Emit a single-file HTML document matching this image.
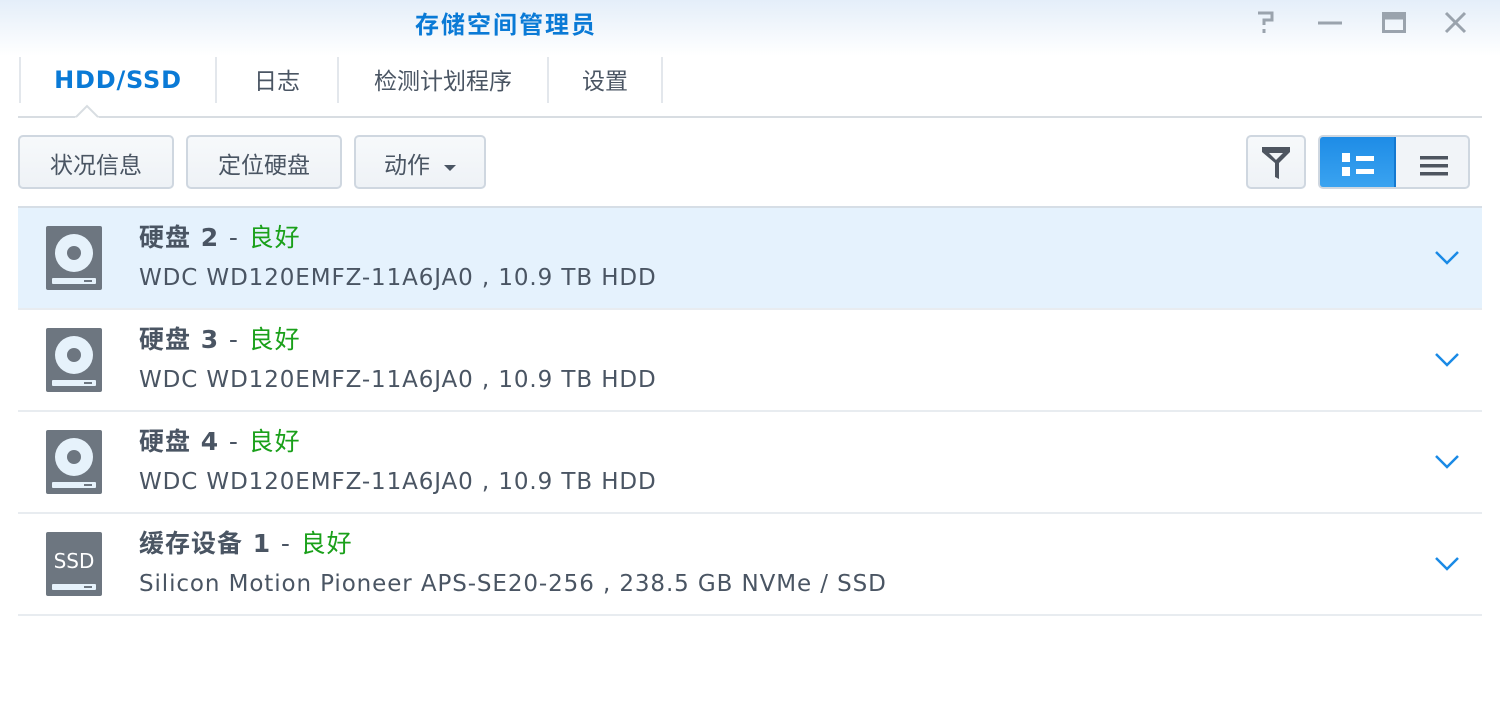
<!DOCTYPE html>
<html><head><meta charset="utf-8"><style>
*{margin:0;padding:0;box-sizing:border-box}
body{width:1500px;height:706px;background:#fff;font-family:"DejaVu Sans","Noto Sans CJK SC",sans-serif;color:#4a5563;position:relative;overflow:hidden}
.top{position:absolute;left:0;top:0;width:1500px;height:56px;background:linear-gradient(#e4eef9,#fff)}
.title{position:absolute;left:415px;top:5px;font-size:24px;color:#0a7ad6;font-weight:bold;letter-spacing:2px;font-family:"Noto Sans CJK SC",sans-serif}
.tab{position:absolute;top:57px;height:46px;border-left:2px solid #e3e7ec;font-size:23px;line-height:44px;text-align:center;color:#4a5563;font-family:"Noto Sans CJK SC",sans-serif}
.abs{position:absolute}
.btn{position:absolute;top:135px;height:54px;border:2px solid #cfd7e0;border-radius:5px;background:linear-gradient(#f7f9fb,#eef2f6);font-size:23px;line-height:52px;text-align:center;color:#4a5563;font-family:"Noto Sans CJK SC",sans-serif}
.row{position:absolute;left:18px;width:1464px;border-bottom:2px solid #e8ecf0}
.row .t{position:absolute;left:121px;top:10px;font-size:25px;font-weight:bold;color:#4a5563;letter-spacing:1px}
.row .t span{font-weight:normal}
.row .t .g{color:#1aa01a;font-weight:normal}
.row .s{position:absolute;left:121px;top:57px;font-size:23px;color:#4a5563;letter-spacing:0.9px}
.row svg.ic{position:absolute;left:28px;top:18px}
.row svg.ch{position:absolute;left:1416px;top:42px}
</style></head><body>
<div class="top"></div>
<div class="title">存储空间管理员</div>
<svg class="abs" style="left:1250px;top:8px" width="230" height="30" viewBox="0 0 230 30">
<g fill="none" stroke="#9aa3ad" stroke-width="3">
<path d="M8 5h14v7h-8v5"/><path d="M14 21v4" />
<path d="M68 15h24"/>
<rect x="133.5" y="5.5" width="21" height="18"/><path d="M133 9h22" stroke-width="5"/>
<path d="M196 5l19 19M215 5l-19 19"/>
</g></svg>
<div class="tab" style="left:19px;width:196px;color:#0a7ad6;font-weight:bold;font-size:24px;letter-spacing:0.8px;line-height:46px;font-family:'DejaVu Sans',sans-serif">HDD/SSD</div>
<div class="tab" style="left:215px;width:122px">日志</div>
<div class="tab" style="left:337px;width:210px">检测计划程序</div>
<div class="tab" style="left:547px;width:114px">设置</div>
<div class="tab" style="left:661px;width:2px"></div>
<div class="abs" style="left:18px;top:116px;width:1464px;height:2px;background:#d8dde2"></div>
<svg class="abs" style="left:75px;top:103px" width="24" height="16"><path d="M0 15L12 3L24 15" fill="#fff" stroke="#d8dde2" stroke-width="2"/><rect x="0" y="14.5" width="24" height="4" fill="#fff"/></svg>
<div class="btn" style="left:18px;width:156px">状况信息</div>
<div class="btn" style="left:186px;width:156px">定位硬盘</div>
<div class="btn" style="left:354px;width:132px;text-align:left;padding-left:28px">动作 <svg width="14" height="10" style="margin-left:8px"><path d="M1 2h12L7 8z" fill="#4a5563"/></svg></div>
<div class="btn" style="left:1246px;width:60px"><svg width="32" height="34" style="margin-top:9px" viewBox="0 0 32 34"><path d="M2 1h28v5L19 17v16l-4 -2V17L2 6z" fill="#4e5560"/><path d="M9 7h14l-7 7z" fill="#f1f4f7"/></svg></div>
<div class="abs" style="left:1318px;top:135px;width:152px;height:54px;border:2px solid #cfd7e0;border-radius:5px;background:#f1f4f8;overflow:hidden">
<div style="position:absolute;left:-2px;top:-2px;width:78px;height:54px;background:linear-gradient(#1e8ce6,#3aa3f0);border:2px solid #1478d0;border-radius:5px 0 0 5px"></div>
<svg class="abs" style="left:22px;top:16px" width="34" height="24"><rect x="0" y="0" width="8" height="9" fill="#fff"/><rect x="0" y="14" width="8" height="9" fill="#fff"/><rect x="14" y="3" width="18" height="5" fill="#fff"/><rect x="14" y="16" width="18" height="5" fill="#fff"/></svg>
<svg class="abs" style="left:100px;top:19px" width="28" height="20"><rect y="0" width="28" height="3.5" fill="#4e5560"/><rect y="8" width="28" height="3.5" fill="#4e5560"/><rect y="16" width="28" height="3.5" fill="#4e5560"/></svg>
</div>
<div class="abs" style="left:18px;top:206px;width:1464px;height:2px;background:#d6dee6"></div>
<svg width="0" height="0" style="position:absolute"><defs>
<g id="hdd"><rect width="56" height="64" rx="2" fill="#6d7680"/><circle cx="28" cy="27" r="19" fill="#e6f2fb"/><circle cx="28" cy="27" r="7" fill="#6d7680"/><rect x="6" y="52" width="44" height="6" rx="1" fill="#e6f2fb"/><rect x="38" y="54" width="8" height="2" fill="#6d7680"/></g>
<path id="chev" d="M2 2l11 11L24 2" fill="none" stroke="#1a8ae6" stroke-width="2.5"/>
</defs></svg>
<div class="row" style="top:208px;height:102px;background:#e5f2fd"><svg class="ic" width="56" height="64"><use href="#hdd"/></svg><div class="t">硬盘 2 <span>-</span> <span class="g">良好</span></div><div class="s">WDC WD120EMFZ-11A6JA0 , 10.9 TB HDD</div><svg class="ch" width="26" height="16"><use href="#chev"/></svg></div>
<div class="row" style="top:310px;height:102px"><svg class="ic" width="56" height="64"><use href="#hdd"/></svg><div class="t">硬盘 3 <span>-</span> <span class="g">良好</span></div><div class="s">WDC WD120EMFZ-11A6JA0 , 10.9 TB HDD</div><svg class="ch" width="26" height="16"><use href="#chev"/></svg></div>
<div class="row" style="top:412px;height:102px"><svg class="ic" width="56" height="64"><use href="#hdd"/></svg><div class="t">硬盘 4 <span>-</span> <span class="g">良好</span></div><div class="s">WDC WD120EMFZ-11A6JA0 , 10.9 TB HDD</div><svg class="ch" width="26" height="16"><use href="#chev"/></svg></div>
<div class="row" style="top:514px;height:102px"><svg class="ic" width="56" height="64"><rect width="56" height="64" rx="2" fill="#6d7680"/><text x="28" y="36" text-anchor="middle" font-family="DejaVu Sans,sans-serif" font-size="20" fill="#fff">SSD</text><rect x="6" y="52" width="44" height="6" rx="1" fill="#e6f2fb"/><rect x="38" y="54" width="8" height="2" fill="#6d7680"/></svg><div class="t">缓存设备 1 <span>-</span> <span class="g">良好</span></div><div class="s">Silicon Motion Pioneer APS-SE20-256 , 238.5 GB NVMe / SSD</div><svg class="ch" width="26" height="16"><use href="#chev"/></svg></div>
</body></html>
